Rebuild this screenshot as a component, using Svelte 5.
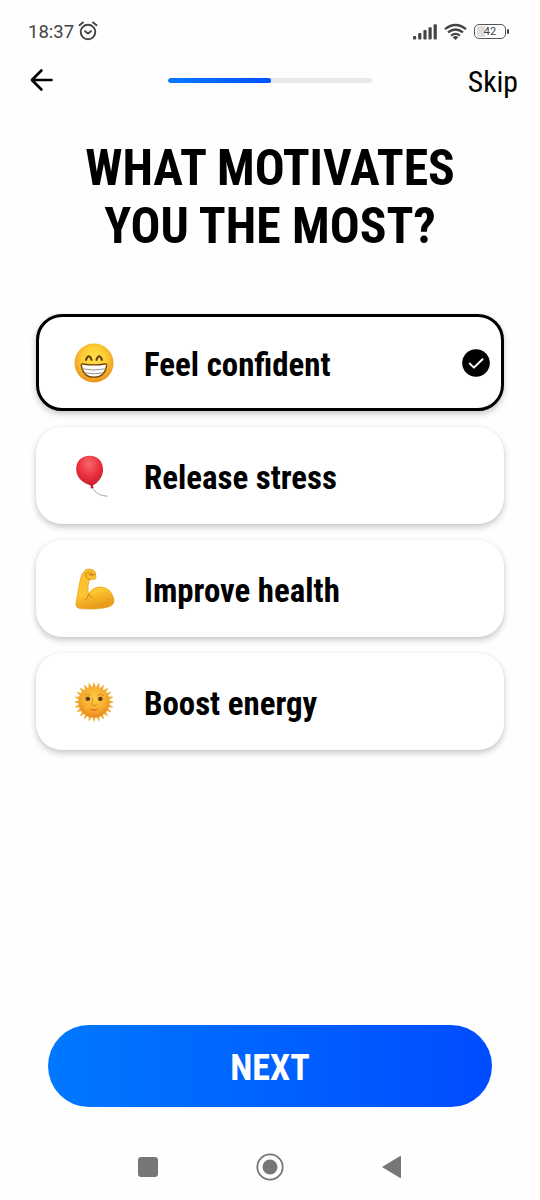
<script>
  let selected = $state(0);
  const options = ['Feel confident', 'Release stress', 'Improve health', 'Boost energy'];
  const rays = Array.from({ length: 24 }, (_, i) => i * 15);
</script>

<div class="screen">
  <div class="status">
    <span class="time">18:37</span>
    <svg class="alarm" width="20" height="20" viewBox="0 0 20 20" fill="none" stroke="#444" stroke-width="1.9" stroke-linecap="round" stroke-linejoin="round">
      <circle cx="10" cy="11" r="7.3" /><path d="M1.5 4.2 5 1.5M15 1.5l3.5 2.7M7 10.2l3 2.3 3-2.3" />
    </svg>
    <svg class="signal" width="24" height="16" viewBox="0 0 24 16" fill="#444">
      <rect x="0" y="12" width="3.2" height="3.5" rx="1" /><rect x="5.2" y="9" width="3.2" height="6.5" rx="1" /><rect x="10.4" y="6" width="3.2" height="9.5" rx="1" /><rect x="15.5" y="3.2" width="3.2" height="12.3" rx="1" /><rect x="20.6" y="0.3" width="3.2" height="15.2" rx="1" />
    </svg>
    <svg class="wifi" width="23" height="18" viewBox="0 0 24 18" fill="none" stroke="#444" stroke-width="2.3">
      <path d="M1 6.1Q12-2.7 23 6.1M4.2 9.5Q12 3.3 19.8 9.5M7.4 12.7Q12 9.1 16.6 12.7" /><path d="M9 14.4Q12 12.2 15 14.4L12 17.3Z" fill="#444" stroke="none" />
    </svg>
    <span class="battery">42</span><span class="tip"></span>
  </div>

  <header>
    <button class="back" aria-label="Back">
      <svg width="24" height="24" viewBox="0 0 24 24" fill="none" stroke="#000" stroke-width="2.6" stroke-linejoin="round" stroke-linecap="round"><path d="M21.5 12H2.5M11.4 2.5 1.9 12l9.5 9.5" /></svg>
    </button>
    <div class="progress"><div></div></div>
    <button class="skip">Skip</button>
  </header>

  <h1>WHAT MOTIVATES<br />YOU THE MOST?</h1>

  <div class="options">
    {#each options as label, i}
      <button class="card" class:selected={selected === i} onclick={() => (selected = i)}>
        <svg class="emoji" width="44" height="44" viewBox="0 0 44 44">
          {#if i === 0}
            <defs>
              <radialGradient id="face" cx=".5" cy=".4" r=".62"><stop offset="0" stop-color="#ffe04b" /><stop offset=".5" stop-color="#fdcd35" /><stop offset="1" stop-color="#e98c1b" /></radialGradient>
            </defs>
            <circle cx="22" cy="22" r="19.5" fill="url(#face)" />
            <path d="M14 18.8Q16.8 11.8 19.6 18.8M24.4 18.8Q27.2 11.8 30 18.8" fill="none" stroke="#65400d" stroke-width="2.1" stroke-linecap="round" />
            <path d="M9.3 24.3Q9 22.8 10.8 23Q22 24.7 33.2 23Q35 22.8 34.7 24.3C33.5 32.5 28.8 36.2 22 36.2S10.5 32.5 9.3 24.3Z" fill="#fff" stroke="#76470d" stroke-width="1.3" />
            <path d="M10.2 27.8Q22 30.4 33.8 27.8M12.3 31.8Q22 33.8 31.7 31.8" fill="none" stroke="#94877d" stroke-width=".9" />
          {:else if i === 1}
            <defs><radialGradient id="balloon" cx=".48" cy=".25" r=".8"><stop offset="0" stop-color="#f9666a" /><stop offset=".5" stop-color="#e8303c" /><stop offset="1" stop-color="#b91526" /></radialGradient></defs>
            <path d="M20.3 33.5C23.5 39 28.5 42 35.5 42.1" fill="none" stroke="#969b9c" stroke-width=".9" />
            <path d="M4.2 16.3C3.8 7 9.5 1.8 17.6 1.8S31.3 7.5 31 16.2C30.7 23.8 25.5 29 20.7 31.5L21.7 34.1 18.7 34.4 18.8 31.5C11.5 29.5 4.6 24 4.2 16.3Z" fill="url(#balloon)" />
            <path d="M19 31.6l1.8-.2" stroke="#9e1320" stroke-width="1" />
          {:else if i === 2}
            <defs><linearGradient id="arm" x1="0" y1="0" x2=".25" y2="1"><stop offset="0" stop-color="#f9bd2d" /><stop offset=".65" stop-color="#fdc630" /><stop offset="1" stop-color="#e99c1b" /></linearGradient></defs>
            <path transform="translate(0 .8)" d="M13 2.5Q15.8.5 19 1.6Q22.8 2 23.4 5L24 9Q24.1 11.7 21.8 11.7L17.5 11.8C15.8 16 15.6 22.5 16.5 26.5Q20.5 19.2 28 19.3C35.5 19.2 40 24 41.8 31.3Q43 37.5 36 39.2C28.5 41.3 17.5 41.8 8.2 40.8Q3.3 40.1 4 35L8 13Q9.2 6 13 2.5Z" fill="url(#arm)" stroke="#e69c1b" stroke-width=".7" />
            <path transform="translate(0 .8)" d="M13.8 5.7Q13.2 10.4 17.6 11.8M14.5 5.2Q17.5 2.7 18.4 6.8M19.5 4.6l1.2 3.6M17.4 7.1Q20.8 7.5 23.2 6.7M16.5 26.5Q16.2 31 13.2 32.3M17.2 26.7Q18.2 29 20.1 29.8" fill="none" stroke="#c98018" stroke-width="1" stroke-linecap="round" />
          {:else}
            <defs><radialGradient id="sun" cx=".5" cy=".38" r=".65"><stop offset="0" stop-color="#fdce4a" /><stop offset=".6" stop-color="#f7ad2e" /><stop offset="1" stop-color="#e6831d" /></radialGradient></defs>
            {#each rays as a}<path d="M20.1 8 22 1.6 23.9 8Z" fill="#f2a929" transform={`rotate(${a} 22 22)`} />{/each}
            <circle cx="22" cy="22" r="15.5" fill="url(#sun)" />
            <ellipse cx="15.7" cy="18.8" rx="2.6" ry="2.3" fill="#b87922" /><ellipse cx="28.5" cy="18.8" rx="2.6" ry="2.3" fill="#b87922" />
            <circle cx="16" cy="18.9" r="1.9" fill="#49351c" /><circle cx="28.2" cy="18.9" r="1.9" fill="#49351c" />
            <path d="M12.6 15.6Q16 12.9 18.8 15.7M25.4 15.7Q28.2 12.9 31.6 15.6M20.6 18Q21 22.5 19.2 24Q20.2 26.3 22 25.3Q23.8 26.3 24.8 24" fill="none" stroke="#d88519" stroke-width=".9" stroke-linecap="round" />
            <path d="M17 28.5Q22 29.7 27 28.5Q22 33.6 17 28.5Z" fill="#e07b20" />
          {/if}
        </svg>
        <span class="label">{label}</span>
        {#if selected === i}
          <svg class="check" width="28" height="28" viewBox="0 0 28 28"><circle cx="14" cy="14" r="13.8" /><path d="M7.8 14.6l4.1 4 8.6-8.4" fill="none" stroke="#fff" stroke-width="2" stroke-linecap="round" stroke-linejoin="round" /></svg>
        {/if}
      </button>
    {/each}
  </div>

  <button class="next">NEXT</button>

  <nav>
    <svg width="28" height="28" viewBox="0 0 28 28" fill="#777"><rect x="4" y="4" width="20" height="20" rx="3.2" /></svg>
    <svg width="28" height="28" viewBox="0 0 28 28"><circle cx="14" cy="14" r="12.7" fill="none" stroke="#777" stroke-width="1.8" /><circle cx="14" cy="14" r="7.5" fill="#777" /></svg>
    <svg width="28" height="28" viewBox="0 0 28 28" fill="#777" stroke="#777" stroke-width="1" stroke-linejoin="round"><path d="M4.8 14 22.5 3.3V24.7Z" /></svg>
  </nav>
</div>

<style>
  :global(body) { margin: 0; background: #fff; }
  * { box-sizing: border-box; }
  button { border: 0; padding: 0; background: none; color: inherit; font: inherit; }
  svg { display: block; flex: none; }
  .screen { width: 540px; height: 1200px; display: flex; flex-direction: column; background: #fefefe; color: #000; overflow: hidden; font-family: "Roboto Condensed", Roboto, sans-serif; font-stretch: 75%; }
  .status { height: 56px; padding: 7px 31px 0 28px; display: flex; align-items: center; flex: none; font-family: Roboto, sans-serif; font-stretch: 100%; color: #444; }
  .time { width: 50px; font-size: 18.5px; letter-spacing: 0; padding-top: 1px; }
  .alarm { margin-top: -2px; }
  .signal { margin-left: auto; margin-right: 7px; }
  .wifi { margin-right: 7px; }
  .battery { width: 32px; height: 15px; border: 1.5px solid #555; border-radius: 5px; font-size: 11px; text-align: center; background: linear-gradient(90deg, #ddd 10px, transparent 10px); background-clip: content-box; padding: 1px 2px; line-height: 11px; }
  .tip { width: 2px; height: 5px; margin-left: 1px; background: #444; border-radius: 1px; }
  header { height: 48px; flex: none; display: grid; grid-template-columns: 138px 204px 1fr; align-items: center; padding: 0 22px 0 30px; }
  .progress { height: 5px; border-radius: 3px; background: #e9e9e9; overflow: hidden; }
  .progress div { width: 103px; height: 100%; border-radius: 3px; background: linear-gradient(90deg, #0879ff, #0051ff); }
  .skip { justify-self: end; font-size: 29.7px; line-height: 35px; margin-top: 3px; }
  h1 { margin: 35px 0 0; text-align: center; font-size: 49.7px; line-height: 58px; font-weight: 700; }
  .options { margin: 59px 36px 0; display: grid; gap: 16px; }
  .card { height: 97px; border-radius: 26px; border: 3px solid transparent; background: #fff; background-clip: border-box; box-shadow: 0 3px 6px rgba(0,0,0,.22), 0 0 2px rgba(0,0,0,.06); display: flex; align-items: center; padding: 0 11px 0 33px; text-align: left; }
  .selected { border-color: #000; }
  .label { font-size: 32.9px; line-height: 39px; font-weight: 700; margin: 4px 0 0 28px; }
  .check { margin-left: auto; }
  .next { height: 82px; margin: 275px 48px 0; border-radius: 41px; background: linear-gradient(90deg, #0078ff, #004cff); color: #fff; font-size: 36px; font-weight: 700; padding-top: 4px; flex: none; }
  nav { display: flex; justify-content: space-between; margin: 46px 134px 0; }
</style>
